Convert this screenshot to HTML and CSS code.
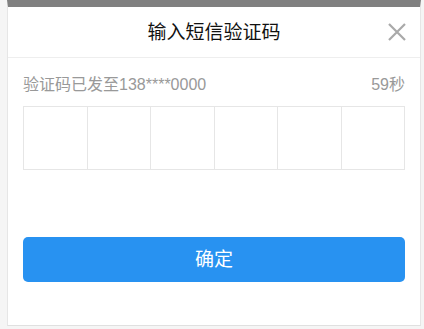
FILE: index.html
```html
<!DOCTYPE html>
<html lang="zh-CN">
<head>
  <meta charset="UTF-8">
  <meta name="viewport" content="width=device-width, initial-scale=1.0">
  <title>输入短信验证码</title>
  <link rel="stylesheet" href="styles.css">
</head>
<body>
  <div class="dialog">
    <div class="dialog-header">
      <h1 class="dialog-title">输入短信验证码</h1>
      <button class="close-btn" aria-label="关闭">
        <svg width="18" height="18" viewBox="0 0 18 18">
          <path d="M1 1 L17 17 M17 1 L1 17" stroke="#a9a9a9" stroke-width="2.2" fill="none"/>
        </svg>
      </button>
    </div>
    <div class="dialog-body">
      <div class="sent-info">
        <span>验证码已发至138****0000</span>
        <span class="countdown">59秒</span>
      </div>
      <div class="code-boxes">
        <div class="code-cell"></div>
        <div class="code-cell"></div>
        <div class="code-cell"></div>
        <div class="code-cell"></div>
        <div class="code-cell"></div>
        <div class="code-cell"></div>
      </div>
      <button class="confirm-btn">确定</button>
    </div>
  </div>
</body>
</html>
```

FILE: styles.css
```css
body {
  margin: 0;
  padding: 0;
  background-color: #f5f5f5;
  font-family: "Liberation Sans", "Noto Sans CJK SC", sans-serif;
}

.dialog {
  width: 414px;
  height: 326px;
  margin-left: 7px;
  box-sizing: border-box;
  background-color: #ffffff;
  border-top: 7px solid #808080;
  border-left: 1px solid #e6e6e6;
  border-right: 1px solid #e6e6e6;
  border-bottom: 1px solid #e0e0e0;
}

.dialog-header {
  position: relative;
  height: 50px;
  border-bottom: 1px solid #eeeeee;
  display: flex;
  align-items: center;
  justify-content: center;
}

.dialog-title {
  margin: 0 0 3px 0;
  font-size: 19px;
  font-weight: normal;
  color: #111;
}

.close-btn {
  position: absolute;
  right: 14px;
  top: 16px;
  width: 18px;
  height: 18px;
  padding: 0;
  border: none;
  background: none;
  cursor: pointer;
}

.close-btn svg {
  display: block;
}

.dialog-body {
  padding: 15px 15px 0 15px;
}

.sent-info {
  display: flex;
  justify-content: space-between;
  font-size: 16px;
  line-height: 24px;
  color: #999;
}

.code-boxes {
  margin-top: 9px;
  display: flex;
  height: 64px;
  border: 1px solid #e6e6e6;
  box-sizing: border-box;
}

.code-cell {
  flex: 1;
  border-right: 1px solid #e6e6e6;
}

.code-cell:last-child {
  border-right: none;
}

.confirm-btn {
  display: block;
  width: 100%;
  height: 45px;
  margin-top: 67px;
  padding: 0 0 5px 0;
  border: none;
  border-radius: 5px;
  background-color: #2892f1;
  color: #fff;
  font-family: inherit;
  font-size: 19px;
  cursor: pointer;
}
```
